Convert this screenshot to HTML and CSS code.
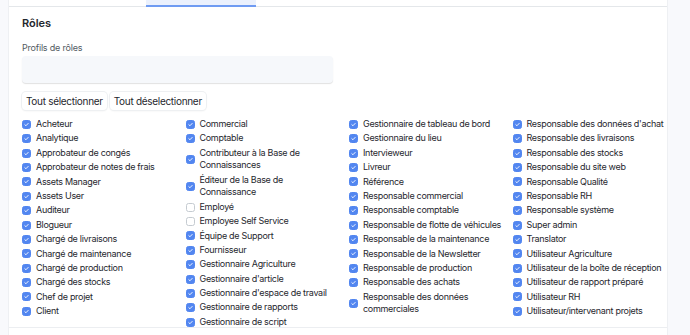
FILE: index.html
```html
<!DOCTYPE html>
<html lang="fr">
<head>
    <meta charset="UTF-8">
    <title>Rôles</title>
    <link rel="stylesheet" href="styles.css">
</head>
<body>

<div class="page">
    <div class="card">
        <div class="tabs">
            <div class="tab active"></div>
        </div>

        <div class="section">
            <h4 class="section-title">Rôles</h4>

            <label class="field-label">Profils de rôles</label>
            <div class="field-input"></div>

            <div class="actions">
                <button class="btn">Tout sélectionner</button>
                <button class="btn">Tout déselectionner</button>
            </div>

            <div class="roles">
                <div class="role-col">
                    <div class="role"><span class="check on"></span><span>Acheteur</span></div>
                    <div class="role"><span class="check on"></span><span>Analytique</span></div>
                    <div class="role"><span class="check on"></span><span>Approbateur de congés</span></div>
                    <div class="role"><span class="check on"></span><span>Approbateur de notes de frais</span></div>
                    <div class="role"><span class="check on"></span><span>Assets Manager</span></div>
                    <div class="role"><span class="check on"></span><span>Assets User</span></div>
                    <div class="role"><span class="check on"></span><span>Auditeur</span></div>
                    <div class="role"><span class="check on"></span><span>Blogueur</span></div>
                    <div class="role"><span class="check on"></span><span>Chargé de livraisons</span></div>
                    <div class="role"><span class="check on"></span><span>Chargé de maintenance</span></div>
                    <div class="role"><span class="check on"></span><span>Chargé de production</span></div>
                    <div class="role"><span class="check on"></span><span>Chargé des stocks</span></div>
                    <div class="role"><span class="check on"></span><span>Chef de projet</span></div>
                    <div class="role"><span class="check on"></span><span>Client</span></div>
                </div>
                <div class="role-col">
                    <div class="role"><span class="check on"></span><span>Commercial</span></div>
                    <div class="role"><span class="check on"></span><span>Comptable</span></div>
                    <div class="role"><span class="check on"></span><span>Contributeur à la Base de Connaissances</span></div>
                    <div class="role"><span class="check on"></span><span>Éditeur de la Base de Connaissance</span></div>
                    <div class="role"><span class="check"></span><span>Employé</span></div>
                    <div class="role"><span class="check"></span><span>Employee Self Service</span></div>
                    <div class="role"><span class="check on"></span><span>Équipe de Support</span></div>
                    <div class="role"><span class="check on"></span><span>Fournisseur</span></div>
                    <div class="role"><span class="check on"></span><span>Gestionnaire Agriculture</span></div>
                    <div class="role"><span class="check on"></span><span>Gestionnaire d'article</span></div>
                    <div class="role"><span class="check on"></span><span>Gestionnaire d'espace de travail</span></div>
                    <div class="role"><span class="check on"></span><span>Gestionnaire de rapports</span></div>
                    <div class="role"><span class="check on"></span><span>Gestionnaire de script</span></div>
                </div>
                <div class="role-col">
                    <div class="role"><span class="check on"></span><span>Gestionnaire de tableau de bord</span></div>
                    <div class="role"><span class="check on"></span><span>Gestionnaire du lieu</span></div>
                    <div class="role"><span class="check on"></span><span>Intervieweur</span></div>
                    <div class="role"><span class="check on"></span><span>Livreur</span></div>
                    <div class="role"><span class="check on"></span><span>Référence</span></div>
                    <div class="role"><span class="check on"></span><span>Responsable commercial</span></div>
                    <div class="role"><span class="check on"></span><span>Responsable comptable</span></div>
                    <div class="role"><span class="check on"></span><span>Responsable de flotte de véhicules</span></div>
                    <div class="role"><span class="check on"></span><span>Responsable de la maintenance</span></div>
                    <div class="role"><span class="check on"></span><span>Responsable de la Newsletter</span></div>
                    <div class="role"><span class="check on"></span><span>Responsable de production</span></div>
                    <div class="role"><span class="check on"></span><span>Responsable des achats</span></div>
                    <div class="role"><span class="check on"></span><span>Responsable des données commerciales</span></div>
                </div>
                <div class="role-col">
                    <div class="role"><span class="check on"></span><span>Responsable des données d'achat</span></div>
                    <div class="role"><span class="check on"></span><span>Responsable des livraisons</span></div>
                    <div class="role"><span class="check on"></span><span>Responsable des stocks</span></div>
                    <div class="role"><span class="check on"></span><span>Responsable du site web</span></div>
                    <div class="role"><span class="check on"></span><span>Responsable Qualité</span></div>
                    <div class="role"><span class="check on"></span><span>Responsable RH</span></div>
                    <div class="role"><span class="check on"></span><span>Responsable système</span></div>
                    <div class="role"><span class="check on"></span><span>Super admin</span></div>
                    <div class="role"><span class="check on"></span><span>Translator</span></div>
                    <div class="role"><span class="check on"></span><span>Utilisateur Agriculture</span></div>
                    <div class="role"><span class="check on"></span><span>Utilisateur de la boîte de réception</span></div>
                    <div class="role"><span class="check on"></span><span>Utilisateur de rapport préparé</span></div>
                    <div class="role"><span class="check on"></span><span>Utilisateur RH</span></div>
                    <div class="role"><span class="check on"></span><span>Utilisateur/intervenant projets</span></div>
                </div>
            </div>
        </div>
    </div>
</div>

</body>
</html>
```

FILE: styles.css
```css
body {
    margin: 0;
    font-family: Inter, "Noto Sans", sans-serif;
    background: #f8f9fc;
    color: #1f272e;
}
.page {
    padding-left: 8px;
    height: 335px;
    overflow: hidden;
}
.card {
    width: 660px;
    background: #fff;
    border-left: 1px solid #eef0f3;
    border-right: 1px solid #eef0f3;
    box-sizing: border-box;
    height: 335px;
}
.tabs {
    height: 6px;
    border-bottom: 1px solid #e4e7ea;
    display: flex;
}
.tab {
    width: 110px;
    margin-left: 137px;
}
.tab.active {
    background: #ebf1fd;
    border-bottom: 2px solid #6f9bf2;
    margin-bottom: -1px;
}
.section {
    padding: 8px 14px 0 13px;
    border-bottom: 1px solid #eceef1;
    height: 321px;
    box-sizing: border-box;
}
.section-title {
    margin: 0 0 11px 0;
    font-size: 11px;
    font-weight: 600;
    line-height: 16px;
}
.field-label {
    display: block;
    font-size: 9px;
    letter-spacing: -0.2px;
    color: #525a62;
    line-height: 12px;
    margin-bottom: 2px;
}
.field-input {
    width: 311px;
    height: 27px;
    border-radius: 4px;
    background: #f6f8fb;
    box-shadow: 0 1px 1px rgba(0, 0, 0, 0.12);
}
.actions {
    display: flex;
    gap: 3px;
    margin-top: 9px;
}
.btn {
    font-family: inherit;
    font-size: 10px;
    letter-spacing: -0.3px;
    color: #1f272e;
    background: #fff;
    border: none;
    border-radius: 4px;
    box-shadow: 0 0 0 1px #eef0f2, 0 1px 2px rgba(0, 0, 0, 0.08);
    height: 18px;
    padding: 0 4px;
}
.roles {
    display: grid;
    grid-template-columns: repeat(4, 163.5px);
    margin-top: 8px;
}
.role {
    display: flex;
    align-items: center;
    gap: 5px;
    font-size: 9px;
    letter-spacing: -0.3px;
    line-height: 12.6px;
    margin-bottom: 1.8px;
    padding-right: 9px;
}
.check {
    flex: 0 0 auto;
    width: 9px;
    height: 9px;
    box-sizing: border-box;
    border: 1px solid #c5cbd1;
    border-radius: 2.5px;
    background: #fff;
}
.check.on {
    border-color: #5286f0;
    background: #5286f0 url("data:image/svg+xml,%3Csvg xmlns='http://www.w3.org/2000/svg' viewBox='0 0 10 10'%3E%3Cpath d='M2.6 5.2l1.6 1.6 3.2-3.4' fill='none' stroke='white' stroke-width='1.3' stroke-linecap='round' stroke-linejoin='round'/%3E%3C/svg%3E") center / 100% no-repeat;
}
```
